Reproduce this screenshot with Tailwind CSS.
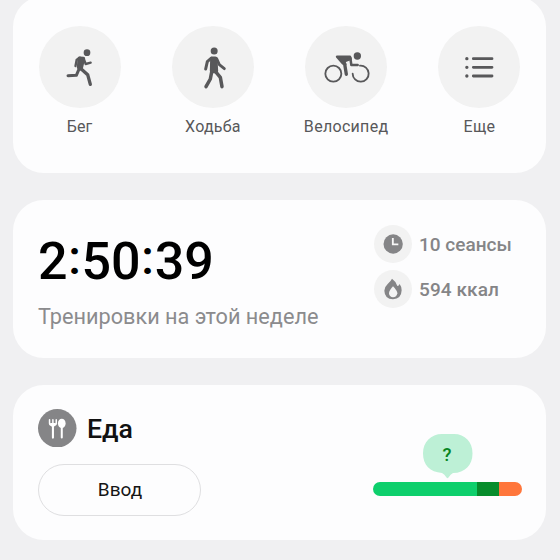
<!DOCTYPE html>
<html lang="ru">
<head>
<meta charset="utf-8">
<title>Тренировки</title>
<script src="https://cdn.jsdelivr.net/npm/@tailwindcss/browser@4"></script>
</head>
<body class="w-[560px] h-[560px] overflow-hidden bg-[#f0f0f2] font-['Roboto',sans-serif]">
<main class="flex flex-col gap-[27px] pl-[13px] w-[546px]">
  <section class="-mt-[4px] h-[177px] rounded-[31px] bg-[#fdfdfe] pt-[30px] grid grid-cols-4 text-base text-[#58585a]">
    <div class="flex flex-col items-center gap-[7px]">
      <div class="size-[82px] rounded-full bg-[#f2f2f2]">
        <svg class="size-full" viewBox="25 17 246 246" fill="none" stroke="#58585a" stroke-linecap="round" stroke-linejoin="round">
          <circle cx="169" cy="97" r="10" fill="#58585a" stroke="none"/>
          <path d="M146 114 L158 115 L151 145 L144 141 Z" fill="#58585a" stroke-width="11"/>
          <path d="M148 112 L138 118 L134.500 137" stroke-width="7"/>
          <path d="M160 117 L165 131 L180 127" stroke-width="7"/>
          <path d="M146 144 L137 165 L112 166" stroke-width="9"/>
          <path d="M151 145 L171 163 L179 192" stroke-width="10"/>
        </svg>
      </div>
      <span class="tracking-[0.1px]">Бег</span>
    </div>
    <div class="flex flex-col items-center gap-[7px]">
      <div class="size-[82px] rounded-full bg-[#f2f2f2]">
        <svg class="size-full" viewBox="25 17 246 246" fill="none" stroke="#58585a" stroke-linecap="round" stroke-linejoin="round">
          <circle cx="151.500" cy="92" r="10.500" fill="#58585a" stroke="none"/>
          <path d="M146 115 H155 L157 152 H145 Z" fill="#58585a" stroke-width="13"/>
          <path d="M143 113 L131 124 L126 146" stroke-width="9"/>
          <path d="M159 115 L167 133 L182 145" stroke-width="8.500"/>
          <path d="M144 155 L140 176 L127 199" stroke-width="10.500"/>
          <path d="M155 153 L170 171 L175 199" stroke-width="10.500"/>
        </svg>
      </div>
      <span class="tracking-[0.2px]">Ходьба</span>
    </div>
    <div class="flex flex-col items-center gap-[7px]">
      <div class="size-[82px] rounded-full bg-[#f2f2f2]">
        <svg class="size-full" viewBox="25 17 246 246" fill="none" stroke="#58585a" stroke-linecap="round" stroke-linejoin="round">
          <circle cx="110" cy="160" r="24" stroke-width="5.500"/>
          <path d="M190 136 A24 24 0 1 1 168 160" stroke-width="5.500"/>
          <circle cx="182" cy="107" r="11" fill="#58585a" stroke="none"/>
          <path d="M121 109 L160 109 L162 116 L143 123 L146 132 L138 129 Z" fill="#58585a" stroke-width="7"/>
          <path d="M161 113 L164 134 H183" stroke-width="7.500"/>
          <path d="M144 131 L149 162" stroke-width="10"/>
        </svg>
      </div>
      <span class="tracking-[0.3px]">Велосипед</span>
    </div>
    <div class="flex flex-col items-center gap-[7px]">
      <div class="size-[82px] rounded-full bg-[#f2f2f2]">
        <svg class="size-full" viewBox="25 17 246 246" fill="none" stroke="#58585a" stroke-linecap="round">
          <path d="M131 115 H187 M131 141 H187 M131 167 H187" stroke-width="8.500"/>
          <path d="M111.500 115 h.1 M111.500 141 h.1 M111.500 167 h.1" stroke-width="10"/>
        </svg>
      </div>
      <span class="tracking-[0.2px]">Еще</span>
    </div>
  </section>

  <section class="h-[157.500px] rounded-[31px] bg-[#fdfdfe] pl-[25px] pr-[34px] flex justify-between">
    <div class="pt-[30px]">
      <div class="flex text-[52px] leading-[64px] font-medium text-black"><span>2</span><span class="w-[14px] text-center text-[48px] -mt-[4px]">:</span><span>50</span><span class="w-[14px] text-center text-[48px] -mt-[4px]">:</span><span>39</span></div>
      <div class="mt-[9px] text-[21.700px] leading-7 text-[#8b8b8d] whitespace-nowrap">Тренировки на этой неделе</div>
    </div>
    <div class="pt-[25px] w-[138px] flex flex-col gap-[7px] text-[19px] font-medium text-[#858587] whitespace-nowrap">
      <div class="flex items-center gap-[7px]">
        <div class="size-[38px] shrink-0 rounded-full bg-[#f2f2f2]">
          <svg class="size-full" viewBox="42 29 114 114" fill="none">
            <circle cx="99.500" cy="86" r="29" fill="#858587"/>
            <path d="M98.500 68 V87 H115" stroke="#f8f8f8" stroke-width="5.500"/>
          </svg>
        </div>
        <span class="pt-[2px]">10 сеансы</span>
      </div>
      <div class="flex items-center gap-[7px]">
        <div class="size-[38px] shrink-0 rounded-full bg-[#f2f2f2]">
          <svg class="size-full" viewBox="42 165 114 114">
            <path d="M96 191 Q107 198 112 213 Q117 213 119 207 Q125 215 125 226 Q124 252 99 253 Q74 252 73 227 Q73 216 83 207 Q92 199 96 191Z" fill="#858587"/>
            <path d="M99 214 Q112 227 112 235 Q110 247 99 247 Q88 246 87 235 Q87 227 99 214Z" fill="#f4f4f4"/>
          </svg>
        </div>
        <span class="pt-[2px] tracking-[0.1px]">594 ккал</span>
      </div>
    </div>
  </section>

  <section class="h-[155.500px] rounded-[31px] bg-[#fdfdfe] pl-[25px] pr-[24px] pt-6 flex justify-between">
    <div>
      <div class="flex items-center gap-[10.500px]">
        <svg class="size-[38.500px]" viewBox="114 117 115 115">
          <circle cx="171.500" cy="174.500" r="57.500" fill="#858587"/>
          <path d="M148.500 149 V160 Q149 166 158 166 Q168 166 168.500 160 V149 M158.500 149 V203" fill="none" stroke="#fff" stroke-width="4.500" stroke-linecap="round"/>
          <path d="M150 159 H167 Q166 170 158.500 171 Q151 170 150 159Z" fill="#fff"/>
          <path d="M158.500 168 V202" stroke="#fff" stroke-width="6" stroke-linecap="round"/>
          <ellipse cx="185" cy="160" rx="11.500" ry="14" fill="#fff"/>
          <path d="M185 170 V202" stroke="#fff" stroke-width="6" stroke-linecap="round"/>
        </svg>
        <h2 class="pt-[3px] text-[26.700px] leading-8 font-medium text-[#111]">Еда</h2>
      </div>
      <button class="mt-[17px] block w-[163px] h-[52px] rounded-full border border-[#dfdfe1] pl-px text-[19px] text-[#151515]">Ввод</button>
    </div>
    <div class="w-[149px] pt-[25.500px] flex flex-col">
      <svg class="ml-[49px] w-[52px] h-[46px]" viewBox="0 0 52 46">
        <path d="M20 0 H32 C43 0 50.500 8 50.500 19.500 C50.500 31 43 39 31 39 Q28.500 40 26.500 43.500 Q25.500 45 24.500 43.500 Q22.500 40 20 39 C8 38 1 31 1 19.500 C1 8 9 0 20 0Z" fill="#bdf0d6"/>
        <text x="25" y="27" text-anchor="middle" font-family="Roboto, sans-serif" font-size="18.500" font-weight="500" fill="#07851f">?</text>
      </svg>
      <div class="mt-[2px] h-[13.500px] rounded-full overflow-hidden flex">
        <div class="w-[104px] bg-[#0ecf6c]"></div>
        <div class="w-[22px] bg-[#078c2c]"></div>
        <div class="flex-1 bg-[#ff763b]"></div>
      </div>
    </div>
  </section>
</main>
</body>
</html>
